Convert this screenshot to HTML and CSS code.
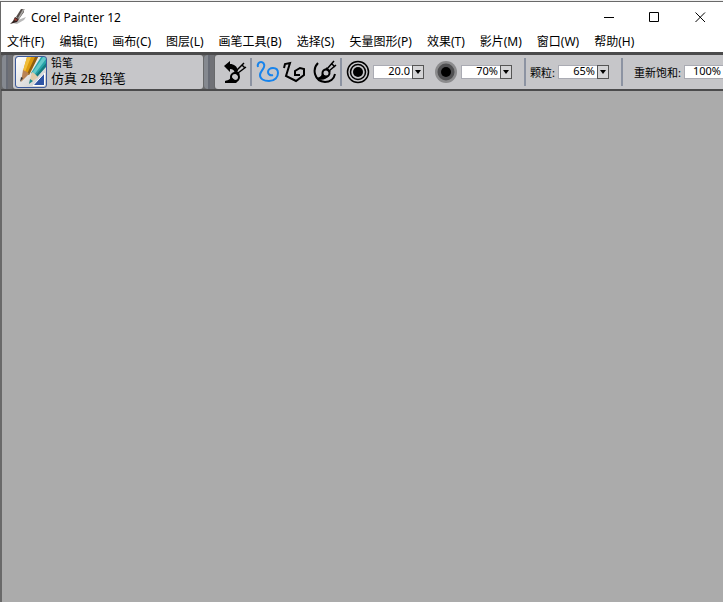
FILE: index.html
```html
<!DOCTYPE html>
<html lang="zh-CN">
<head>
    <meta charset="UTF-8">
    <meta name="viewport" content="width=device-width, initial-scale=1.0">
    <title>Corel Painter 12</title>
    <link rel="stylesheet" href="styles.css">
</head>
<body>
    <div class="backdrop"></div>
    <div class="window">
        <header class="titlebar">
            <svg class="app-icon" width="16" height="16" viewBox="0 0 16 16">
                <path d="M2 14l6-3 8-3-2 3-7 4z" fill="#b9b9b9"/>
                <path d="M11 0h3v3L9 10 6 8z" fill="#554d49"/>
                <path d="M13 0h2L9 10l-1-1z" fill="#aaa8a5"/>
                <path d="M5 8l4 2-2 3-7 2 3-3z" fill="#30201e"/>
                <path d="M5 9l3 2-2 1-2-1z" fill="#943f35"/>
            </svg>
            <h1 class="title">Corel Painter 12</h1>
            <div class="window-buttons">
                <button type="button" aria-label="最小化">
                    <svg width="11" height="11" viewBox="0 0 11 11"><path d="M1 5.5h10"/></svg>
                </button>
                <button type="button" aria-label="最大化">
                    <svg width="11" height="11" viewBox="0 0 11 11"><path d="M.5 .5h9v9h-9z"/></svg>
                </button>
                <button type="button" aria-label="关闭">
                    <svg width="11" height="11" viewBox="0 0 11 11"><path d="M.5 .5l9.500 9.500M10 .5L.5 10"/></svg>
                </button>
            </div>
        </header>

        <nav class="menu">
            <a href="#">文件(F)</a>
            <a href="#">编辑(E)</a>
            <a href="#">画布(C)</a>
            <a href="#">图层(L)</a>
            <a href="#">画笔工具(B)</a>
            <a href="#">选择(S)</a>
            <a href="#">矢量图形(P)</a>
            <a href="#">效果(T)</a>
            <a href="#">影片(M)</a>
            <a href="#">窗口(W)</a>
            <a href="#">帮助(H)</a>
        </nav>

        <div class="toolbar">
            <div class="grip"></div>
            <button type="button" class="brush">
                <svg class="brush-icon" width="32" height="32" viewBox="0 0 32 32">
                    <defs>
                        <linearGradient id="paper" x1="0" y1="0" x2="1" y2="1">
                            <stop offset="0" stop-color="#fff"/>
                            <stop offset="1" stop-color="#c9c9c9"/>
                        </linearGradient>
                    </defs>
                    <path d="M3 1h26l2 2v26l-2 2H3l-2-2V3z" fill="url(#paper)"/>
                    <path d="M12 1h11l-9 18-6-4z" fill="#dd9a0c"/>
                    <path d="M12 1h4L10 16l-2-1z" fill="#f1be3a"/>
                    <path d="M20 1h3l-9 18-2-1z" fill="#8d5c12"/>
                    <path d="M8 14l2 1 2 1 2 2-8 8z" fill="#b98355"/>
                    <path d="M6 21l2 1-3 4z" fill="#333"/>
                    <path d="M26 1h5v9l-9 11-6-4z" fill="#27a3a8"/>
                    <path d="M28 1h3v2L19 19l-2-2z" fill="#65c9ca"/>
                    <path d="M31 7v4l-9 10-2-1z" fill="#157b80"/>
                    <path d="M17 16l3 2 3 3-9 7z" fill="#e0cba8"/>
                    <path d="M15 23l3 2-4 3z" fill="#1b8a8e"/>
                    <path d="M18 29.500h11.500V17z" fill="#2f55a5" stroke="#fff"/>
                    <rect x=".5" y=".5" width="31" height="31" rx="2.500" fill="none" stroke="#3c5a9c"/>
                </svg>
                <span class="brush-names">
                    <span class="brush-category">铅笔</span>
                    <span class="brush-variant">仿真 2B 铅笔</span>
                </span>
            </button>

            <div class="grip"></div>
            <div class="properties">
                <button type="button" class="tool" aria-label="重置工具">
                    <svg width="24" height="24" viewBox="0 0 24 24">
                        <path d="M1 6l6-5v3c4 0 7 2 8 7l-3 2c-1-3-2-4-5-4v3z" fill="#000"/>
                        <path d="M21 3l-8 8M23 7l-8 6M19 5l3 3" fill="none" stroke="#000" stroke-width="1.500"/>
                        <path d="M12 11l4 4" fill="none" stroke="#000" stroke-width="2.500"/>
                        <circle cx="12" cy="17" r="4" fill="none" stroke="#000" stroke-width="2"/>
                        <path d="M8 15c0 4-2 5-6 6v2h11l3-3c-4 1-7-1-8-5z" fill="#000"/>
                    </svg>
                </button>
                <span class="divider"></span>
                <div class="strokes">
                    <button type="button" class="tool active" aria-label="手绘笔触">
                        <svg width="24" height="24" viewBox="0 0 24 24">
                            <path d="M2 7c-1-3 1-5 3-5s4 2 3 5-4 5-4 8c0 4 4 6 9 6 6 0 9-4 9-8 0-3-2-5-5-5s-5 2-5 4 2 4 5 3" fill="none" stroke="currentColor" stroke-width="2"/>
                        </svg>
                    </button>
                    <button type="button" class="tool" aria-label="直线笔触">
                        <svg width="24" height="24" viewBox="0 0 24 24">
                            <path d="M2 8l1-4 5-1-4 13 10 5 8-6V9l-4-1-5 3v4h5" fill="none" stroke="currentColor" stroke-width="2"/>
                        </svg>
                    </button>
                </div>
                <button type="button" class="tool" aria-label="对齐路径绘画">
                    <svg width="24" height="24" viewBox="0 0 24 24">
                        <path d="M5 3C-1 9 1 21 12 22c5 0 9-3 10-8" fill="none" stroke="#000" stroke-width="2"/>
                        <path d="M21 1l-7 8M23 5l-7 6M19 4l3 3" fill="none" stroke="#000" stroke-width="1.500"/>
                        <path d="M13 8l4 4" fill="none" stroke="#000" stroke-width="2"/>
                        <circle cx="13" cy="13" r="3.500" fill="none" stroke="#000" stroke-width="2"/>
                        <path d="M9 12c0 4-2 5-5 6 3 3 9 2 12-2-4 1-6-1-7-4z" fill="#000"/>
                    </svg>
                </button>
                <span class="divider"></span>
                <div class="field">
                    <label for="size" aria-label="大小">
                        <svg width="24" height="24" viewBox="0 0 24 24">
                            <circle cx="12" cy="12" r="10.500" fill="none" stroke="#000" stroke-width="1.500"/>
                            <circle cx="12" cy="12" r="7.500" fill="none" stroke="#000" stroke-width="1.500"/>
                            <circle cx="12" cy="12" r="5" fill="#000"/>
                        </svg>
                    </label>
                    <span class="combo">
                        <input type="text" id="size" value="20.0">
                        <button type="button" aria-label="调整大小"><svg width="6" height="4" viewBox="0 0 6 4"><path d="M0 0h6L3 4z"/></svg></button>
                    </span>
                </div>
                <div class="field opacity">
                    <label for="opacity" aria-label="不透明度">
                        <svg width="24" height="24" viewBox="0 0 24 24">
                            <circle cx="12" cy="12" r="11" fill="#8b8b8d"/>
                            <circle cx="12" cy="12" r="8.500" fill="#505052"/>
                            <circle cx="12" cy="12" r="5" fill="#000"/>
                        </svg>
                    </label>
                    <span class="combo">
                        <input type="text" id="opacity" value="70%">
                        <button type="button" aria-label="调整不透明度"><svg width="6" height="4" viewBox="0 0 6 4"><path d="M0 0h6L3 4z"/></svg></button>
                    </span>
                </div>
                <span class="divider wide"></span>
                <div class="field">
                    <label for="grain">颗粒:</label>
                    <span class="combo">
                        <input type="text" id="grain" value="65%">
                        <button type="button" aria-label="调整颗粒"><svg width="6" height="4" viewBox="0 0 6 4"><path d="M0 0h6L3 4z"/></svg></button>
                    </span>
                </div>
                <span class="divider wide"></span>
                <div class="field resat">
                    <label for="resat">重新饱和:</label>
                    <span class="combo">
                        <input type="text" id="resat" value="100%">
                        <button type="button" aria-label="调整重新饱和"><svg width="6" height="4" viewBox="0 0 6 4"><path d="M0 0h6L3 4z"/></svg></button>
                    </span>
                </div>
            </div>
        </div>

        <main class="workspace"></main>
    </div>
</body>
</html>
```

FILE: styles.css
```css
* {
    box-sizing: border-box;
}
body {
    display: flex;
    flex-direction: column;
    height: 100vh;
    margin: 0;
    overflow: hidden;
    font-family: "Noto Sans", "Noto Sans CJK SC", sans-serif;
    font-size: 12px;
    color: #000;
}
button {
    padding: 0;
    border: 0;
    background: none;
    font: inherit;
    color: inherit;
}
svg {
    display: block;
}

.backdrop {
    height: 1px;
    background: #f0f0f0;
}
.window {
    display: flex;
    flex: 1;
    flex-direction: column;
    border-top: 1px solid #696969;
    border-left: 1px solid #696969;
    background: #fff;
}

/* title bar */
.titlebar {
    display: flex;
    align-items: center;
    height: 30px;
    padding-left: 9px;
}
.title {
    flex: 1;
    margin: 0 0 0 5px;
    font-size: 12px;
    font-weight: normal;
}
.window-buttons {
    display: flex;
}
.window-buttons button {
    display: flex;
    align-items: center;
    justify-content: center;
    width: 46px;
    height: 30px;
}
.window-buttons path {
    fill: none;
    stroke: #000;
}

/* menu */
.menu {
    display: flex;
    gap: 15px;
    height: 20px;
    padding-left: 6px;
    line-height: 20px;
    white-space: nowrap;
}
.menu a {
    color: #000;
    text-decoration: none;
}

/* toolbar */
.toolbar {
    display: flex;
    height: 39px;
    border-top: 3px solid #4b4b4c;
    border-bottom: 2px solid #4b4b4c;
    background: #68696b;
}
.grip {
    flex: none;
    width: 10px;
    margin: 0 1px;
    border-right: 4px solid #707176;
    border-left: 4px solid #858990;
    border-radius: 4px 0 0 4px;
    background: #686c76;
}
.brush {
    display: flex;
    flex: none;
    align-items: center;
    width: 190px;
    padding-left: 2px;
    border-radius: 3px;
    background: #c6c6c9;
    text-align: left;
}
.brush-names {
    display: flex;
    flex-direction: column;
    padding: 0 0 2px 4px;
}
.brush-category {
    font-size: 11px;
    line-height: 14px;
}
.brush-variant {
    font-size: 13px;
    line-height: 16px;
}
.properties {
    display: flex;
    flex: 1;
    align-items: center;
    min-width: 0;
    padding-left: 8px;
    border-radius: 3px 0 0 3px;
    background: #c6c6c9;
    overflow: hidden;
    font-size: 11px;
}
.tool {
    flex: none;
}
.tool.active {
    color: #1683ec;
}
.strokes {
    display: flex;
    gap: 2px;
    margin-right: 7px;
}
.divider {
    flex: none;
    width: 2px;
    height: 28px;
    margin: 0 4px 0 3px;
    background: #8c93a2;
}
.divider.wide {
    margin-left: 12px;
}
.field {
    display: flex;
    flex: none;
    align-items: center;
    gap: 3px;
}
.opacity {
    margin-left: 10px;
}
.resat {
    margin-left: 7px;
}
.combo {
    display: flex;
    height: 14px;
}
.combo input {
    width: 39px;
    padding: 0 2px 3px;
    border: 1px solid #aaabb3;
    border-right: 0;
    border-radius: 0;
    background: #fff;
    font: inherit;
    line-height: 9px;
    text-align: right;
}
.combo button {
    display: flex;
    align-items: center;
    justify-content: center;
    width: 12px;
    border: 1px solid #555;
    background: #d4d4d6;
}

.workspace {
    flex: 1;
    border-left: 1px solid #696969;
    background: #ababab;
}
```
